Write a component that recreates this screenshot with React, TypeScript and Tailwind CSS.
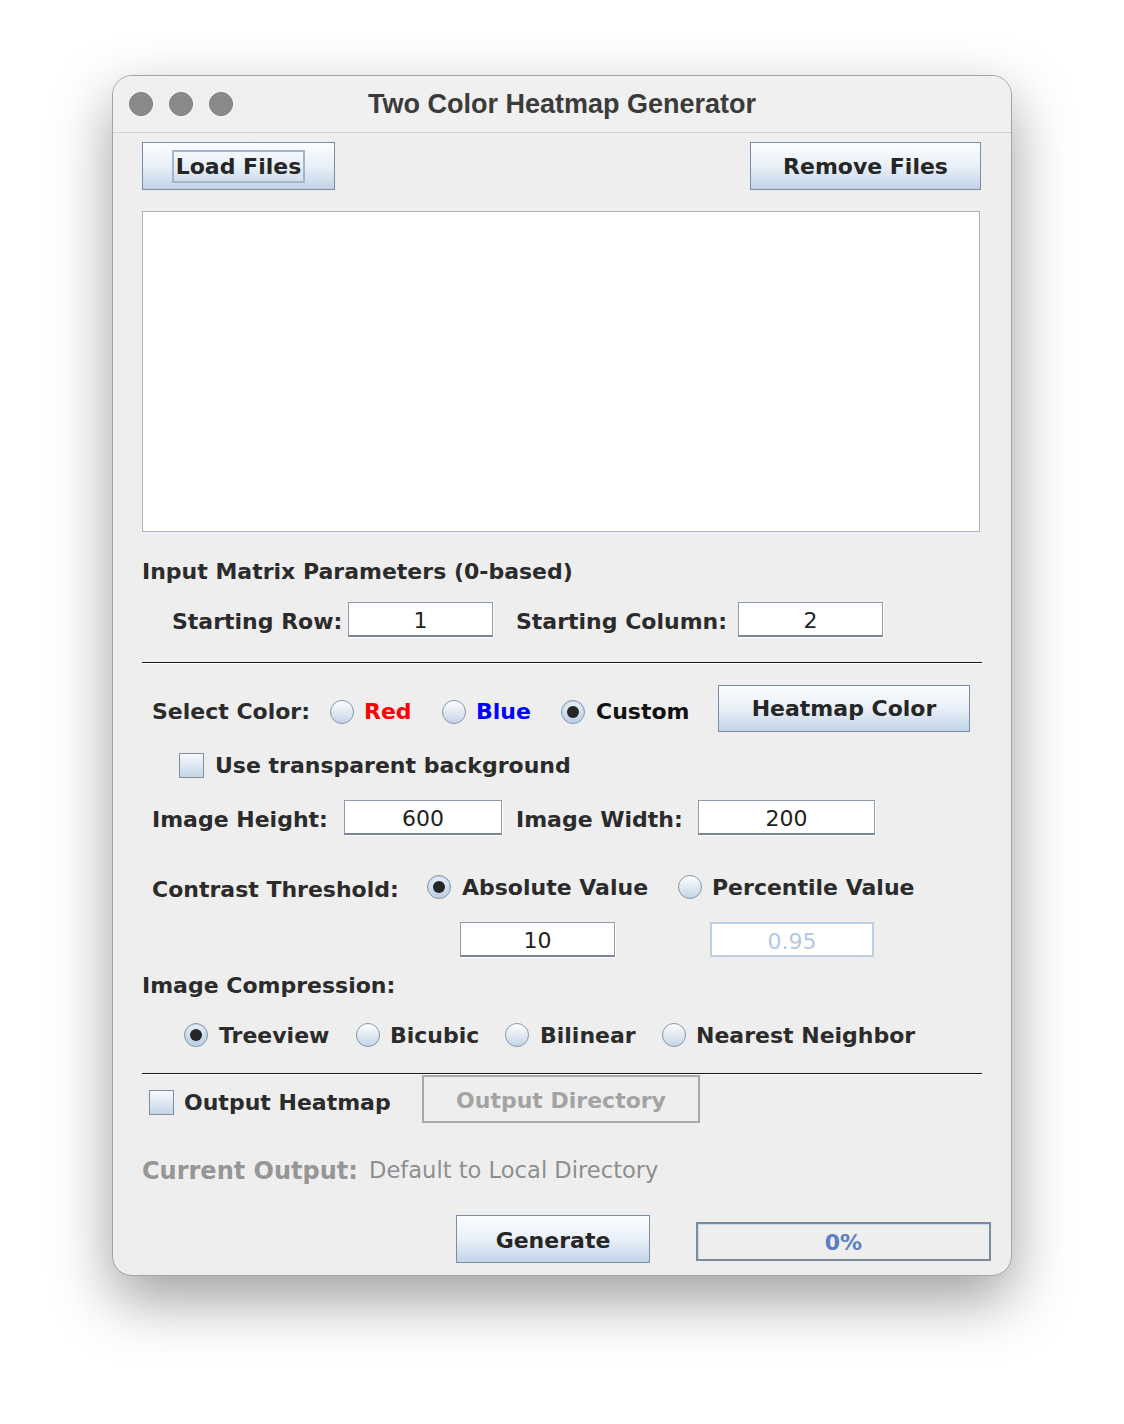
import React from "react";

const F = "font-['DejaVu_Sans',sans-serif]";

function Radio({ checked }: { checked?: boolean }) {
  return (
    <span
      className={`inline-flex items-center justify-center w-[24px] h-[24px] rounded-full border shrink-0 ${
        checked
          ? "border-[#7f95ad] bg-gradient-to-b from-[#e8eff7] to-[#b9cde2] shadow-[inset_0_0_0_1px_#c9d8e8]"
          : "border-[#8696a8] bg-gradient-to-b from-[#ffffff] to-[#c4d4e6]"
      }`}
    >
      {checked && <span className="w-[12px] h-[12px] rounded-full bg-[#262626]" />}
    </span>
  );
}

function Check() {
  return (
    <span className="inline-block w-[25px] h-[25px] border border-[#7f8fa2] bg-gradient-to-b from-[#f7fafd] to-[#c5d5e7] shrink-0" />
  );
}

function Btn({ children, w, cls = "" }: { children: React.ReactNode; w: string; cls?: string }) {
  return (
    <div
      className={`${w} h-[48px] shrink-0 flex items-center justify-center border border-[#7b8da2] bg-gradient-to-b from-[#fbfdff] via-[#e9f0f8] to-[#c2d3e7] text-[22px] font-bold text-[#262626] ${cls}`}
    >
      {children}
    </div>
  );
}

function Field({ value, w, disabled }: { value: string; w: string; disabled?: boolean }) {
  return (
    <div
      className={`${w} h-[35px] shrink-0 flex items-center justify-center bg-white text-[22px] font-normal pt-[3px] ${
        disabled
          ? "border-2 border-[#bcd0e6] text-[#b3c8e2]"
          : "border border-[#8e9bab] border-b-2 border-b-[#7a8696] text-[#222] shadow-[1px_1px_0_#ffffff]"
      }`}
    >
      {value}
    </div>
  );
}

function Cell({ w, children, cls = "" }: { w: string; children?: React.ReactNode; cls?: string }) {
  return <div className={`${w} shrink-0 flex items-center ${cls}`}>{children}</div>;
}

function Sep() {
  return <div className="h-[2px] w-[840px] border-t border-[#1a1a1a] border-b border-b-white" />;
}

export default function App() {
  return (
    <div className={`w-[1124px] h-[1424px] bg-white pl-[112px] pt-[75px] ${F}`}>
      <div className="w-[900px] h-[1201px] rounded-[20px] border border-[#a3a3a3] bg-[#eeeeee] shadow-[0_24px_60px_rgba(0,0,0,0.38)] overflow-hidden flex flex-col">
        {/* Title bar */}
        <div className="h-[57px] shrink-0 bg-[#f0f0f0] border-b border-[#d2d2d2] flex items-center relative">
          <div className="flex gap-[16px] pl-[16px]">
            <span className="w-[24px] h-[24px] rounded-full bg-[#8a8a8a] border border-[#7c7c7c]" />
            <span className="w-[24px] h-[24px] rounded-full bg-[#8a8a8a] border border-[#7c7c7c]" />
            <span className="w-[24px] h-[24px] rounded-full bg-[#8a8a8a] border border-[#7c7c7c]" />
          </div>
          <div className="absolute inset-0 flex items-center justify-center pointer-events-none">
            <span className="font-['Liberation_Sans',sans-serif] font-bold text-[27px] text-[#3b3b3b] pl-[0px]">
              Two Color Heatmap Generator
            </span>
          </div>
        </div>

        {/* Content */}
        <div className="pl-[29px] flex flex-col text-[22px] font-bold text-[#2b2b2b]">
          <div className="mt-[9px] flex justify-between w-[839px]">
            <Btn w="w-[193px]">
              <span className="border-2 border-[#a2b6cd] px-[2px] leading-[29px]">Load Files</span>
            </Btn>
            <Btn w="w-[231px]">Remove Files</Btn>
          </div>

          <div className="mt-[21px] w-[838px] h-[321px] bg-white border border-[#a7b5c6]" />

          <div className="mt-[26px] h-[26px] flex items-center">Input Matrix Parameters (0-based)</div>

          <div className="mt-[18px] flex h-[35px]">
            <Cell w="w-[30px]" />
            <Cell w="w-[176px]" cls="pt-[4px]">Starting Row:</Cell>
            <Field value="1" w="w-[145px]" />
            <Cell w="w-[23px]" />
            <Cell w="w-[222px]" cls="pt-[4px]">Starting Column:</Cell>
            <Field value="2" w="w-[145px]" />
          </div>

          <div className="mt-[25px]">
            <Sep />
          </div>

          <div className="mt-[21px] flex h-[47px] items-center">
            <Cell w="w-[10px]" />
            <Cell w="w-[178px]" cls="pt-[6px]">Select Color:</Cell>
            <Cell w="w-[34px]" cls="pt-[6px]"><Radio /></Cell>
            <Cell w="w-[78px]" cls="pt-[6px] text-[#ff0000]">Red</Cell>
            <Cell w="w-[34px]" cls="pt-[6px]"><Radio /></Cell>
            <Cell w="w-[85px]" cls="pt-[6px] text-[#0000ff]">Blue</Cell>
            <Cell w="w-[35px]" cls="pt-[6px]"><Radio checked /></Cell>
            <Cell w="w-[122px]" cls="pt-[6px] text-[#111111]">Custom</Cell>
            <Btn w="w-[252px]" cls="!h-[47px] text-[#111111]">Heatmap Color</Btn>
          </div>

          <div className="mt-[20px] flex h-[26px] items-center">
            <Cell w="w-[37px]" />
            <Cell w="w-[36px]"><Check /></Cell>
            <Cell w="w-[400px]">Use transparent background</Cell>
          </div>

          <div className="mt-[22px] flex h-[35px] items-center">
            <Cell w="w-[10px]" />
            <Cell w="w-[192px]" cls="pt-[4px]">Image Height:</Cell>
            <Field value="600" w="w-[158px]" />
            <Cell w="w-[14px]" />
            <Cell w="w-[182px]" cls="pt-[4px]">Image Width:</Cell>
            <Field value="200" w="w-[177px]" />
          </div>

          <div className="mt-[39px] flex h-[26px] items-center">
            <Cell w="w-[10px]" />
            <Cell w="w-[275px]" cls="pt-[4px]">Contrast Threshold:</Cell>
            <Cell w="w-[35px]"><Radio checked /></Cell>
            <Cell w="w-[216px]">Absolute Value</Cell>
            <Cell w="w-[34px]"><Radio /></Cell>
            <Cell w="w-[230px]">Percentile Value</Cell>
          </div>

          <div className="mt-[22px] flex h-[35px] items-center">
            <Cell w="w-[318px]" />
            <Field value="10" w="w-[155px]" />
            <Cell w="w-[95px]" />
            <Field value="0.95" w="w-[164px]" disabled />
          </div>

          <div className="mt-[15px] h-[26px] flex items-center">Image Compression:</div>

          <div className="mt-[24px] flex h-[26px] items-center">
            <Cell w="w-[42px]" />
            <Cell w="w-[35px]"><Radio checked /></Cell>
            <Cell w="w-[137px]">Treeview</Cell>
            <Cell w="w-[34px]"><Radio /></Cell>
            <Cell w="w-[115px]">Bicubic</Cell>
            <Cell w="w-[35px]"><Radio /></Cell>
            <Cell w="w-[122px]">Bilinear</Cell>
            <Cell w="w-[34px]"><Radio /></Cell>
            <Cell w="w-[230px]">Nearest Neighbor</Cell>
          </div>

          <div className="mt-[25px]">
            <Sep />
          </div>

          <div className="mt-[0px] flex h-[48px] items-center">
            <Cell w="w-[7px]" />
            <Cell w="w-[35px]" cls="pt-[6px]"><Check /></Cell>
            <Cell w="w-[238px]" cls="pt-[6px]">Output Heatmap</Cell>
            <div className="w-[278px] h-[48px] shrink-0 flex items-center justify-center border-2 border-[#a9a9a9] bg-[#eeeeee] text-[#a3a3a3] pt-[2px]">
              Output Directory
            </div>
          </div>

          <div className="mt-[35px] flex h-[26px] items-center text-[#969696]">
            <Cell w="w-[227px]" cls="text-[24px]">Current Output:</Cell>
            <span className="font-normal text-[#8e8e8e] text-[22.6px]">Default to Local Directory</span>
          </div>

          <div className="mt-[31px] flex h-[48px] items-center">
            <Cell w="w-[314px]" />
            <Btn w="w-[194px]" cls="pt-[3px]">Generate</Btn>
            <Cell w="w-[46px]" />
            <div className="w-[295px] h-[39px] mt-[4px] shrink-0 flex items-center justify-center border-2 border-[#7c8c9f] bg-[#eeeeee] shadow-[inset_1px_1px_0_#c9d9ee] text-[#5b7fc3] pt-[2px]">
              0%
            </div>
          </div>
        </div>
      </div>
    </div>
  );
}
